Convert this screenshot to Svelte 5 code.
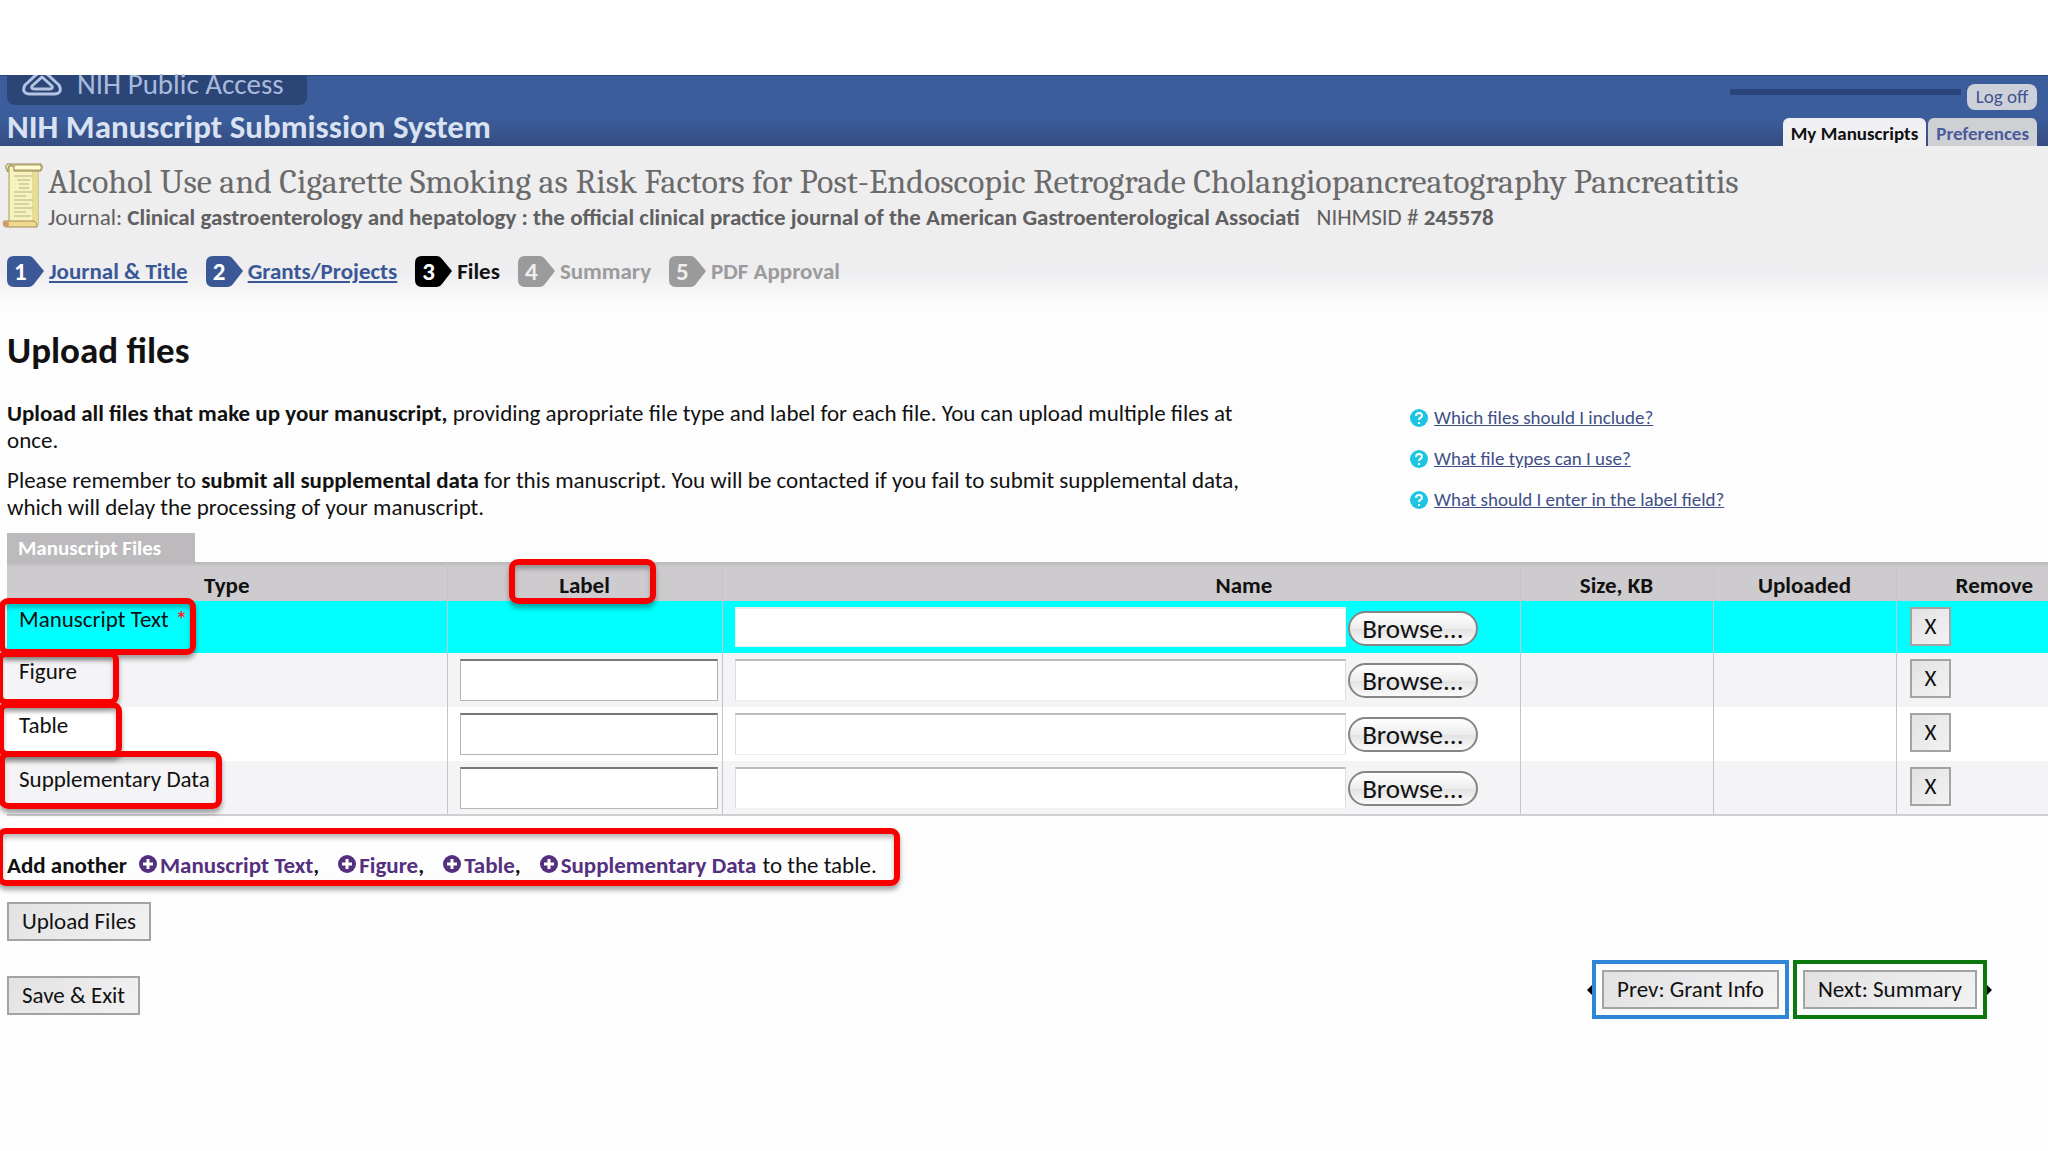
<script lang="ts">
  const steps = [
    { n: 1, name: "Journal & Title", state: "link" },
    { n: 2, name: "Grants/Projects", state: "link" },
    { n: 3, name: "Files", state: "current" },
    { n: 4, name: "Summary", state: "todo" },
    { n: 5, name: "PDF Approval", state: "todo" },
  ];
  const help = ["Which files should I include?", "What file types can I use?", "What should I enter in the label field?"];
  let rows = $state([
    { type: "Manuscript Text", required: true, mark: "mark-text" },
    { type: "Figure", required: false, mark: "mark-figure" },
    { type: "Table", required: false, mark: "mark-table" },
    { type: "Supplementary Data", required: false, mark: "mark-data" },
  ]);
  const addable = ["Manuscript Text", "Figure", "Table", "Supplementary Data"];

  function addRow(e: Event, type: string) {
    e.preventDefault();
    rows.push({ type, required: false, mark: "" });
  }
  function removeRow(i: number) {
    rows.splice(i, 1);
  }
</script>

<div class="page">
  <header>
    <div class="brand">
      <a class="public-access" href="#home">
        <svg width="42" height="21" viewBox="0 0 42 21" fill="none" stroke="#b4c4e2" stroke-width="3" stroke-linejoin="round">
          <path d="M15 0 Q21 -5 27 0 L38 10 Q42 18 34 19 H8 Q0 18 4 10 Z" />
          <path d="M21 2 L31 11 Q32 14 29 14 H13 Q10 14 11 11 Z" />
        </svg>
        <span>NIH Public Access</span>
      </a>
      <div class="system">NIH Manuscript Submission System</div>
    </div>
    <div class="account">
      <div class="user">
        <span class="redacted"></span>
        <button class="logoff">Log off</button>
      </div>
      <nav class="tabs">
        <a class="tab active" href="#manuscripts">My Manuscripts</a>
        <a class="tab" href="#preferences">Preferences</a>
      </nav>
    </div>
  </header>

  <section class="manuscript">
    <div class="title-row">
      <svg class="scroll" width="42" height="66" viewBox="0 0 42 66">
        <path d="M7 3 H36 V62 H7 Z" fill="#f7f3bd" stroke="#a89a62" />
        <path d="M30 8 H36 V62 H30 Z" fill="#e8dd94" />
        <path d="M5 1 H39 Q42 4 39 8 H12 V4 Q8 0 6 5 V9 Q2 4 5 1 Z" fill="#f3eba4" stroke="#8d8355" />
        <path d="M12 2 H39 V7 H12 Z" fill="#fffbd2" stroke="#a89a62" />
        <path d="M2 58 H32 Q36 60 35 64 H4 Q0 63 2 58 Z" fill="#efd98f" stroke="#a58a50" />
        <circle cx="4" cy="61" r="3" fill="#d59a68" />
        <g stroke="#b5af82">
          <path d="M12 13 H31 M15 17 H28 M17 21 H27 M17 25 H27 M12 29 H30 M12 33 H24 M12 37 H31 M12 41 H27 M12 45 H31 M12 49 H24 M12 53 H29" />
        </g>
      </svg>
      <div>
        <h1>Alcohol Use and Cigarette Smoking as Risk Factors for Post-Endoscopic Retrograde Cholangiopancreatography Pancreatitis</h1>
        <p class="journal">
          <span>Journal: <b>Clinical gastroenterology and hepatology : the official clinical practice journal of the American Gastroenterological Associati</b></span>
          <span>NIHMSID # <b>245578</b></span>
        </p>
      </div>
    </div>
    <ol class="steps">
      {#each steps as step}
        <li class={step.state}>
          <span class="badge">
            <svg width="37" height="31" viewBox="0 0 37 31"><path d="M7 0 H22 Q25 0 27 3 L37 15 L27 28 Q25 31 22 31 H7 Q0 31 0 24 V7 Q0 0 7 0 Z" fill="currentColor" /></svg>
            <span class="num">{step.n}</span>
          </span>
          {#if step.state == "link"}
            <a href="#step{step.n}">{step.name}</a>
          {:else}
            <span>{step.name}</span>
          {/if}
        </li>
      {/each}
    </ol>
  </section>

  <main>
    <h2>Upload files</h2>
    <div class="intro">
      <div class="text">
        <p><b>Upload all files that make up your manuscript,</b> providing apropriate file type and label for each file. You can upload multiple files at once.</p>
        <p>Please remember to <b>submit all supplemental data</b> for this manuscript. You will be contacted if you fail to submit supplemental data, which will delay the processing of your manuscript.</p>
      </div>
      <ul class="help">
        {#each help as question}
          <li>
            <svg width="18" height="18" viewBox="0 0 18 18">
              <circle cx="9" cy="9" r="9" fill="#1cc5e2" />
              <path d="M6 7 Q6 4 9 4 Q12 4 12 7 Q12 8 10 9 Q9 10 9 11 M9 13 V15" fill="none" stroke="#fff" stroke-width="2" />
            </svg>
            <a href="#help">{question}</a>
          </li>
        {/each}
      </ul>
    </div>

    <div class="caption" id="files-caption">Manuscript Files</div>
    <table aria-labelledby="files-caption">
      <colgroup>
        <col class="col-type" /><col class="col-label" /><col />
        <col class="col-size" /><col class="col-uploaded" /><col class="col-remove" />
      </colgroup>
      <thead>
        <tr>
          <th>Type</th>
          <th>Label<span class="mark mark-label"></span></th>
          <th class="name-head">Name</th>
          <th>Size, KB</th>
          <th>Uploaded</th>
          <th>Remove</th>
        </tr>
      </thead>
      <tbody>
        {#each rows as row, i}
          <tr class:required={row.required}>
            <td class="type">
              {row.type}{#if row.required}<span class="star">*</span>{/if}
              {#if row.mark}<span class="mark {row.mark}"></span>{/if}
            </td>
            <td class="label">
              {#if !row.required}<input type="text" aria-label="{row.type} label" />{/if}
            </td>
            <td>
              <div class="file">
                <input type="text" aria-label="{row.type} file name" />
                <button class="browse">Browse...</button>
              </div>
            </td>
            <td></td>
            <td></td>
            <td class="remove"><button class="btn" aria-label="Remove {row.type}" onclick={() => removeRow(i)}>X</button></td>
          </tr>
        {/each}
      </tbody>
    </table>

    <div class="add">
      <b>Add another</b>
      {#each addable as type, i}
        <span class="add-item">
          <a href="#add" onclick={e => addRow(e, type)}>
            <svg width="18" height="18" viewBox="0 0 18 18">
              <circle cx="9" cy="9" r="9" fill="#54307f" />
              <path d="M9 4 V14 M4 9 H14" stroke="#fff" stroke-width="3" />
            </svg>{type}</a>{#if i < addable.length - 1}<b>,</b>{/if}
        </span>
      {/each}
      <span>to the table.</span>
      <span class="mark mark-add"></span>
    </div>

    <button class="btn">Upload Files</button>

    <div class="actions">
      <button class="btn save">Save &amp; Exit</button>
      <div class="pager">
        <svg width="5" height="10" viewBox="0 0 5 10"><path d="M5 0 V10 L0 5 Z" /></svg>
        <div class="frame prev"><button class="btn">Prev: Grant Info</button></div>
        <div class="frame next"><button class="btn">Next: Summary</button></div>
        <svg width="5" height="10" viewBox="0 0 5 10"><path d="M0 0 V10 L5 5 Z" /></svg>
      </div>
    </div>
  </main>
</div>

<style>
  :global(body) {
    margin: 0;
    background: #fdfdfd;
  }
  .page {
    min-height: 100vh;
    box-sizing: border-box;
    padding-top: 75px;
    overflow: hidden;
    background: linear-gradient(#fff 75px, #fdfdfd 75px);
    font-family: Calibri, Carlito, Lato, sans-serif;
    font-size: 23px;
    line-height: 27px;
    color: #111;
  }
  h1, h2, p, ul, ol {
    margin: 0;
    padding: 0;
    list-style: none;
  }
  button {
    font-family: inherit;
    color: #111;
    cursor: pointer;
  }

  header {
    display: flex;
    justify-content: space-between;
    height: 71px;
    background: linear-gradient(#3c5d9b 60%, #354c80);
    box-shadow: inset 0 1px #2c4577;
  }
  .brand {
    padding-left: 7px;
  }
  .public-access {
    display: flex;
    align-items: flex-start;
    gap: 14px;
    width: 300px;
    height: 30px;
    padding-left: 14px;
    box-sizing: border-box;
    border-radius: 0 0 8px 8px;
    background: #2c4577;
    color: #a9bbdd;
    font-size: 29px;
    line-height: 18px;
    text-decoration: none;
  }
  .system {
    color: #d9e2f2;
    font-size: 33px;
    font-weight: bold;
    line-height: 45px;
  }
  .account {
    display: flex;
    flex-direction: column;
    justify-content: space-between;
    align-items: flex-end;
    padding: 9px 11px 0 0;
  }
  .user {
    display: flex;
    gap: 6px;
  }
  .redacted {
    width: 231px;
    height: 6px;
    margin-top: 5px;
    background: #29457c;
  }
  .logoff {
    height: 26px;
    padding: 0 9px;
    border: 0;
    border-radius: 8px;
    background: #ccd0d8;
    color: #3f5391;
    font-size: 19px;
    line-height: 26px;
  }
  .tabs {
    display: flex;
    gap: 2px;
  }
  .tab {
    padding: 3px 8px 0;
    border-radius: 6px 6px 0 0;
    background: #cfd0d3;
    color: #4a5c9d;
    font-size: 19px;
    font-weight: bold;
    line-height: 25px;
    text-decoration: none;
  }
  .tab.active {
    background: #f0f0f2;
    color: #111;
  }

  .manuscript {
    padding: 16px 0 18px 2px;
    background: linear-gradient(#efeeef, #eeedef 80%, #fdfdfd);
  }
  .title-row {
    display: flex;
    gap: 4px;
  }
  .scroll {
    flex: none;
    margin-top: 1px;
  }
  h1 {
    color: #6a6a6a;
    font-family: Cambria, Caladea, "Liberation Serif", serif;
    font-size: 34px;
    font-weight: normal;
    line-height: 40px;
    white-space: nowrap;
  }
  .journal {
    display: flex;
    gap: 17px;
    color: #606060;
    line-height: 30px;
    white-space: nowrap;
  }
  .steps {
    display: flex;
    gap: 18px;
    padding: 24px 0 0 5px;
    font-weight: bold;
  }
  .steps li {
    display: flex;
    align-items: center;
    gap: 5px;
  }
  .badge {
    display: grid;
    color: #3a5896;
  }
  .badge svg, .num {
    grid-area: 1 / 1;
  }
  .num {
    padding-left: 7px;
    color: #fff;
    font-size: 25px;
    line-height: 31px;
  }
  .steps a {
    color: #3a5896;
  }
  .current .badge {
    color: #000;
  }
  .todo, .todo .badge {
    color: #9b9b9b;
  }
  .todo .num {
    color: #eee;
  }

  main {
    padding-left: 7px;
  }
  h2 {
    padding-top: 24px;
    font-size: 37px;
    line-height: 44px;
  }
  .intro {
    display: flex;
    gap: 145px;
    padding: 27px 0 12px;
  }
  .text {
    width: 1258px;
    flex: none;
  }
  .text p + p {
    margin-top: 13px;
  }
  .help {
    display: flex;
    flex-direction: column;
    gap: 14px;
    padding-top: 4px;
    font-size: 19px;
  }
  .help li {
    display: flex;
    align-items: center;
    gap: 6px;
  }
  .help a {
    color: #3f4f86;
  }

  .caption {
    width: 188px;
    box-sizing: border-box;
    padding: 2px 0 0 11px;
    background: #bcbabc;
    color: #fff;
    font-size: 21px;
    font-weight: bold;
    line-height: 27px;
  }
  /* the last column runs past the right edge of the window */
  table {
    width: calc(100% + 44px);
    table-layout: fixed;
    border-collapse: collapse;
    border-bottom: 2px solid #d0ced0;
  }
  .col-type { width: 440px; }
  .col-label { width: 275px; }
  .col-size { width: 193px; }
  .col-uploaded { width: 183px; }
  .col-remove { width: 196px; }
  th, td {
    position: relative;
    padding: 0;
    border-left: 1px solid #c6c4c6;
    vertical-align: top;
  }
  th:first-child, td:first-child {
    border-left: 0;
  }
  th {
    padding: 8px 0 1px;
    line-height: 30px;
    background: linear-gradient(#b8b6b8, #cdcbcd 5px);
  }
  th.name-head {
    padding-left: 246px;
  }
  tbody tr {
    height: 54px;
    background: #fff;
  }
  tbody tr:nth-child(even) {
    background: #f4f3f5;
  }
  tbody tr.required {
    height: 52px;
    background: #0ff;
  }
  .type {
    padding: 5px 0 0 12px;
  }
  .star {
    margin-left: 7px;
    color: #f22;
    font-weight: bold;
  }
  input {
    box-sizing: border-box;
    border: 1px solid #b5b5b5;
    border-top: 2px solid #777;
    background: #fff;
    font: inherit;
  }
  .label {
    padding: 6px 4px 0 12px;
  }
  .label input {
    display: block;
    width: 100%;
    height: 42px;
  }
  .file {
    display: flex;
    gap: 2px;
    padding: 6px 42px 0 12px;
  }
  .file input {
    flex: 1;
    min-width: 0;
    height: 42px;
    border-color: #bbb #ddd #eee #ddd;
  }
  .required .file input {
    height: 40px;
    border-color: #eee;
  }
  .browse {
    height: 35px;
    margin-top: 4px;
    padding: 0 12px;
    border: 2px solid #858585;
    border-radius: 18px;
    background: linear-gradient(#fff, #ededed 50%, #e2e2e2 51%, #fafafa);
    font-size: 27px;
    line-height: 28px;
  }
  .btn {
    height: 39px;
    padding: 0 13px;
    border: 2px solid #a3a3a3;
    background: linear-gradient(135deg, #e2e2e4, #f2f2f3);
    font-size: 23px;
    line-height: 33px;
  }
  .remove {
    padding: 6px 0 0 13px;
  }

  .add {
    position: relative;
    display: flex;
    width: max-content;
    padding: 36px 20px 23px 0;
  }
  .add-item {
    margin-left: 12px;
    font-weight: bold;
  }
  .add-item + .add-item {
    margin-left: 19px;
  }
  .add-item + span {
    margin-left: 6px;
  }
  .add-item a {
    color: #54307f;
    text-decoration: none;
  }
  .add-item svg {
    margin-right: 3px;
  }

  .actions {
    display: flex;
    justify-content: space-between;
    align-items: flex-end;
    padding: 19px 56px 0 0;
  }
  .save {
    margin-bottom: 4px;
  }
  .pager {
    display: flex;
    align-items: center;
  }
  .frame {
    display: flex;
    padding: 6px;
    border: 4px solid #2f86d6;
  }
  .frame.next {
    margin-left: 4px;
    border-color: #0a780c;
  }

  /* red call-out boxes drawn over the form */
  .mark {
    position: absolute;
    z-index: 1;
    box-sizing: border-box;
    border: 6px solid #f90000;
    border-radius: 9px;
    box-shadow: 0 4px 5px rgba(0, 0, 0, 0.35), inset 0 4px 4px rgba(0, 0, 0, 0.25);
    pointer-events: none;
  }
  .mark-label {
    top: -3px;
    left: 61px;
    width: 147px;
    height: 45px;
  }
  .mark-text {
    top: -3px;
    left: -8px;
    width: 197px;
    height: 57px;
  }
  .mark-figure {
    top: -2px;
    left: -10px;
    width: 122px;
    height: 54px;
  }
  .mark-table {
    top: -5px;
    left: -9px;
    width: 124px;
    height: 55px;
  }
  .mark-data {
    top: -10px;
    left: -8px;
    width: 223px;
    height: 58px;
  }
  .mark-add {
    top: 12px;
    left: -10px;
    width: 903px;
    height: 58px;
  }
</style>
